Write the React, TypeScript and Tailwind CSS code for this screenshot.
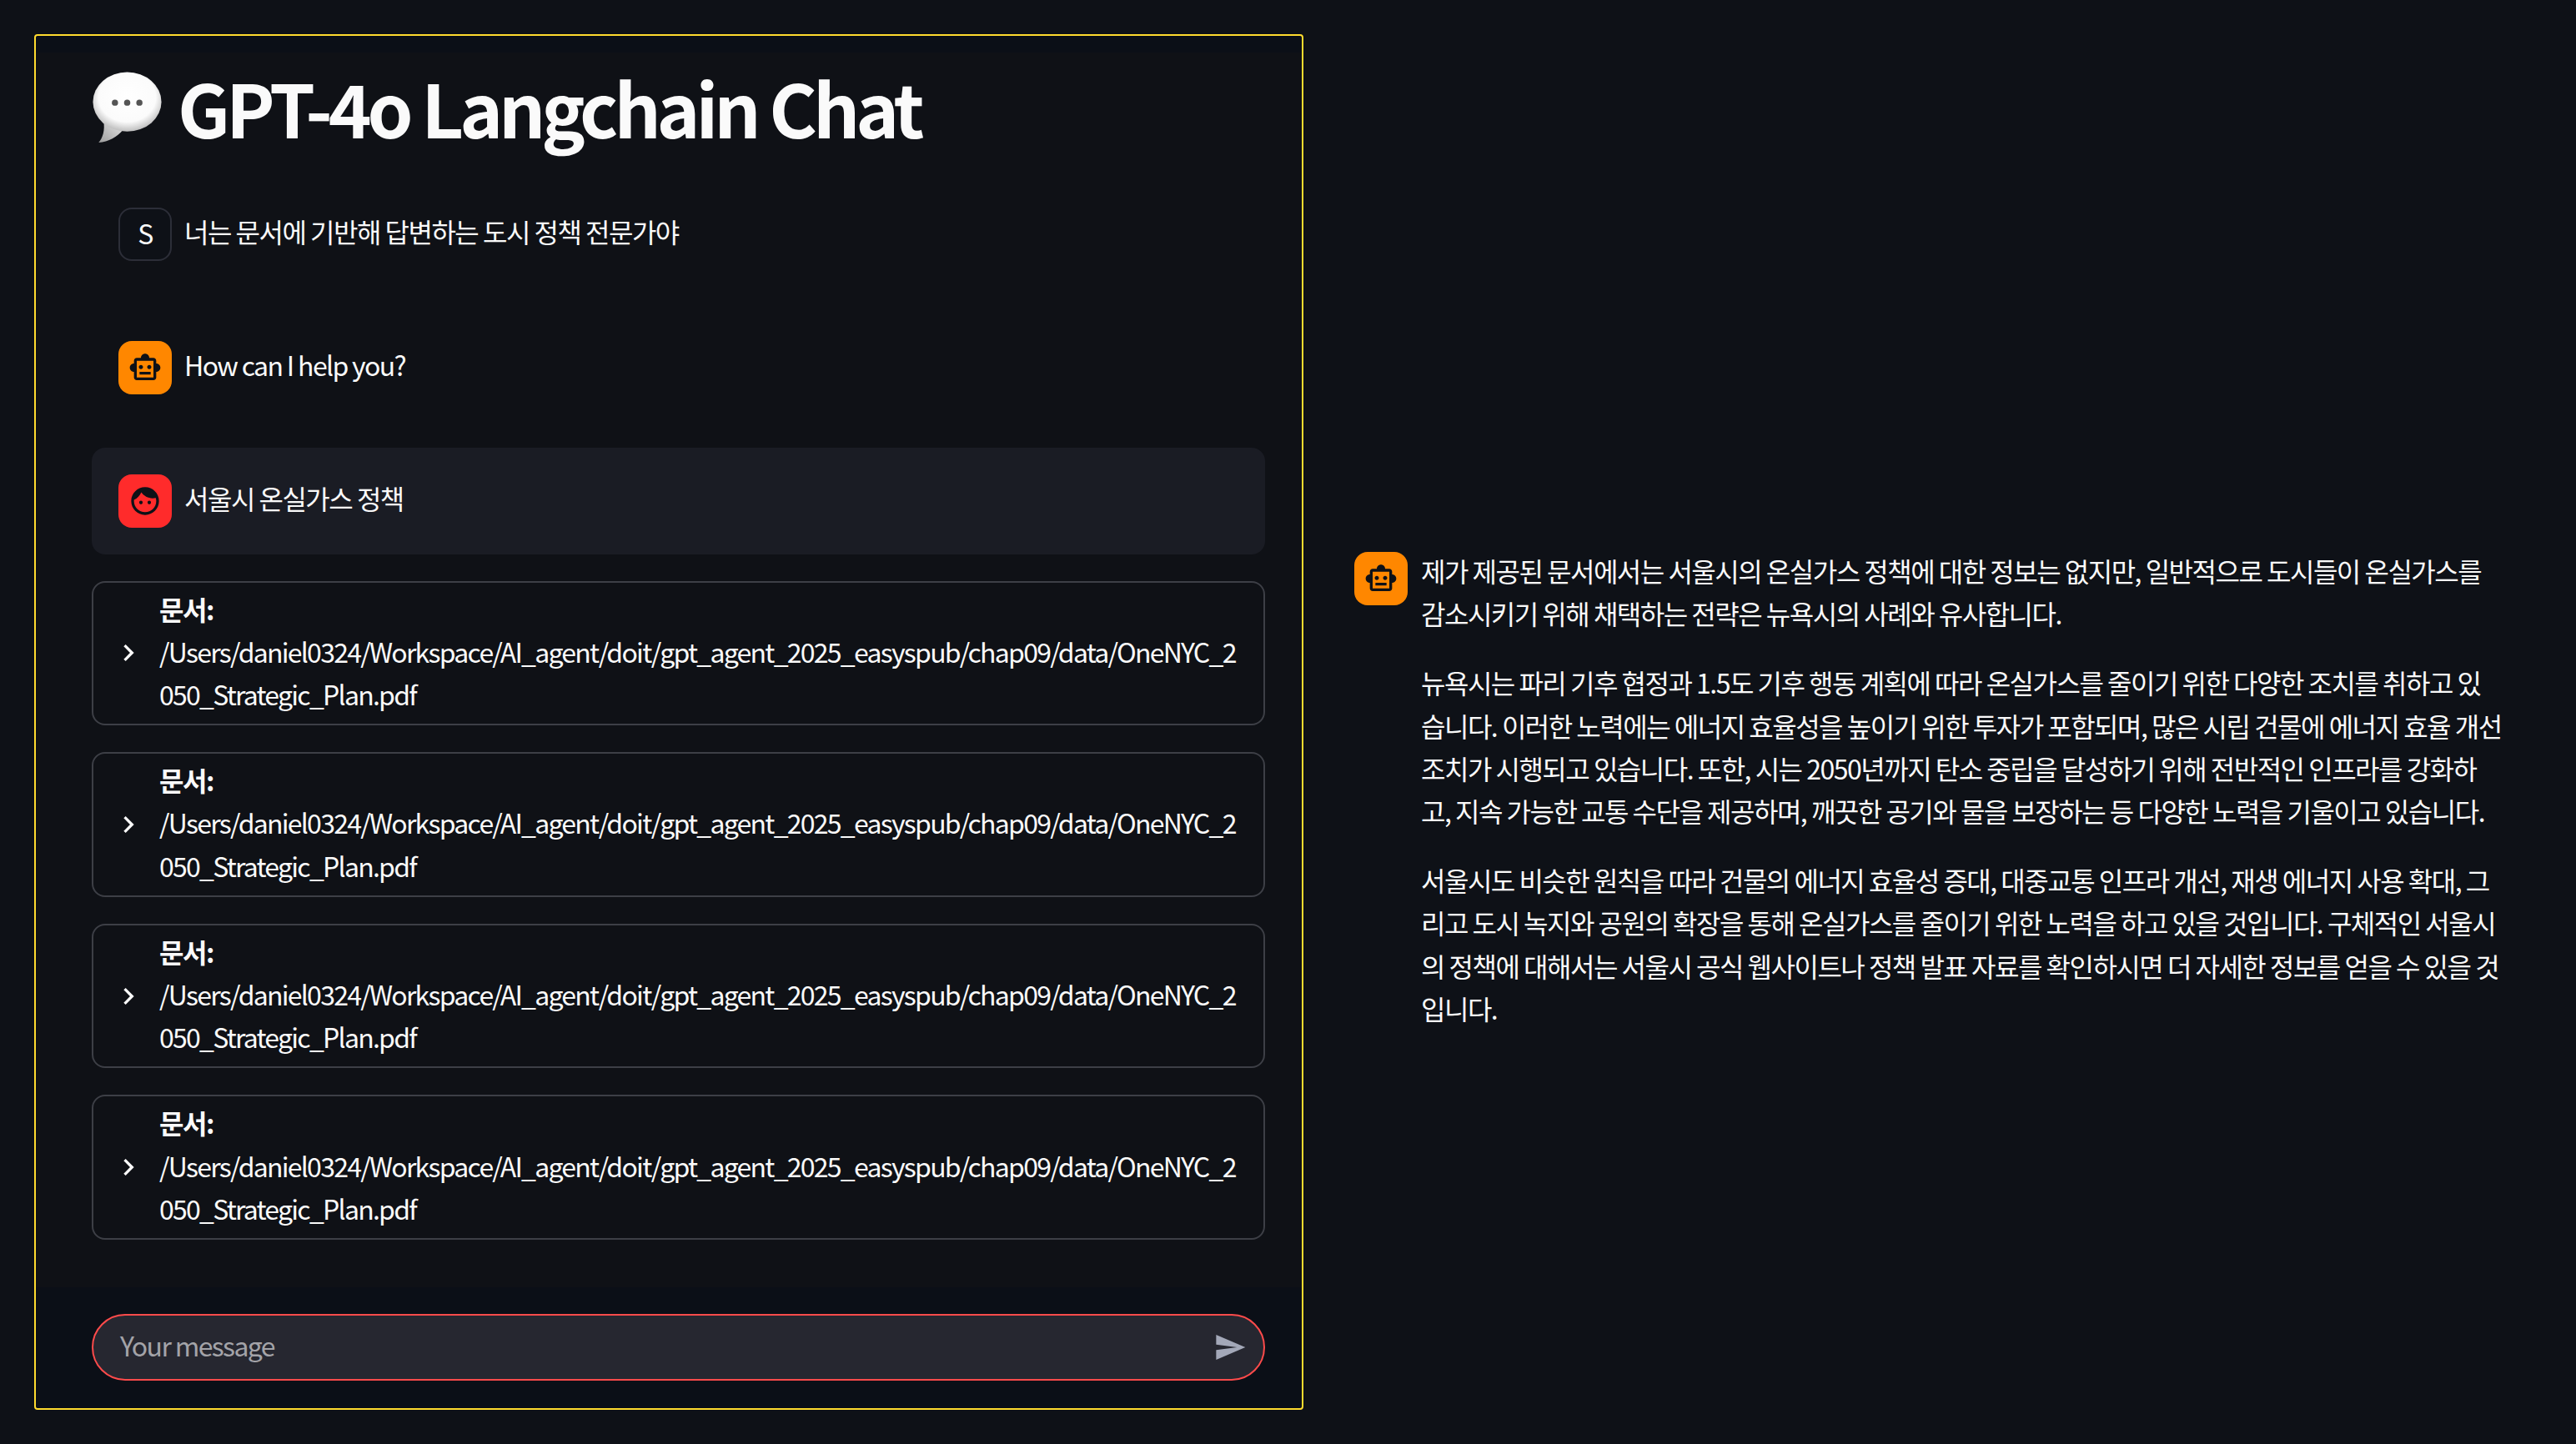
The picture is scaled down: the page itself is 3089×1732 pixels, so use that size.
const SMART_TOY = "M20 9V7c0-1.1-.9-2-2-2h-3c0-1.66-1.34-3-3-3S9 3.34 9 5H6c-1.1 0-2 .9-2 2v2c-1.66 0-3 1.34-3 3s1.34 3 3 3v4c0 1.1.9 2 2 2h12c1.1 0 2-.9 2-2v-4c1.66 0 3-1.34 3-3s-1.34-3-3-3zm-2 10H6V7h12v12zm-9-6c-.83 0-1.5-.67-1.5-1.5S8.17 10 9 10s1.5.67 1.5 1.5S9.83 13 9 13zm7.5-1.5c0 .83-.67 1.5-1.5 1.5s-1.5-.67-1.5-1.5.67-1.5 1.5-1.5 1.5.67 1.5 1.5zM8 15h8v2H8v-2z";
const FACE = "M9 11.75c-.69 0-1.25.56-1.25 1.25s.56 1.25 1.25 1.25 1.25-.56 1.25-1.25-.56-1.25-1.25-1.25zm6 0c-.69 0-1.25.56-1.25 1.25s.56 1.25 1.25 1.25 1.25-.56 1.25-1.25-.56-1.25-1.25-1.25zM12 2C6.48 2 2 6.48 2 12s4.48 10 10 10 10-4.48 10-10S17.52 2 12 2zm0 18c-4.41 0-8-3.59-8-8 0-.29.02-.58.05-.86 2.36-1.05 4.23-2.98 5.21-5.37C11.07 8.33 14.05 10 17.42 10c.78 0 1.53-.09 2.25-.26.21.71.33 1.47.33 2.26 0 4.41-3.59 8-8 8z";

function MaterialAvatar({ path, bg }: { path: string; bg: string }) {
  return (
    <div className={`flex h-16 w-16 shrink-0 items-center justify-center rounded-2xl ${bg}`}>
      <svg viewBox="0 0 24 24" className="h-10 w-10 fill-[#0e1117]">
        <path d={path} />
      </svg>
    </div>
  );
}

function ChatBubbleEmoji() {
  return (
    <svg viewBox="0 0 86 88" className="mt-[-6px] h-[86px] w-[85px] shrink-0">
      <defs>
        <radialGradient id="bubble" cx="50%" cy="42%" r="58%">
          <stop offset="0%" stopColor="#ffffff" />
          <stop offset="72%" stopColor="#fbfbfb" />
          <stop offset="100%" stopColor="#bdbdbd" />
        </radialGradient>
        <linearGradient id="tail" x1="0" y1="1" x2="1" y2="0">
          <stop offset="0%" stopColor="#9c9c9c" />
          <stop offset="100%" stopColor="#e8e8e8" />
        </linearGradient>
      </defs>
      <path d="M14 60 C16 72 13 81 8 87 C20 86 31 80 38 71 Z" fill="url(#tail)" />
      <ellipse cx="43" cy="37" rx="42" ry="36.5" fill="url(#bubble)" />
      <circle cx="28" cy="38" r="3.8" fill="#555" />
      <circle cx="43" cy="38" r="3.8" fill="#555" />
      <circle cx="58" cy="38" r="3.8" fill="#555" />
    </svg>
  );
}

function Expander() {
  return (
    <div className="flex items-center rounded-2xl border-2 border-[#3d3f46] pb-[10px] pl-8 pr-8 pt-[6px]">
      <svg viewBox="0 0 24 24" className="ml-[-10px] mr-[17px] mt-[4px] h-10 w-10 shrink-0 fill-[#fafafa]">
        <path d="M10 6L8.59 7.41 13.17 12l-4.58 4.59L10 18l6-6z" />
      </svg>
      <div className="min-w-0 flex-1 [overflow-wrap:anywhere]">
        <p className="font-semibold">문서:</p>
        <p className="tracking-[-1.75px]">/Users/daniel0324/Workspace/AI_agent/doit/gpt_agent_2025_easyspub/chap09/data/OneNYC_2050_Strategic_Plan.pdf</p>
      </div>
    </div>
  );
}

export default function App() {
  return (
    <div className="flex h-[1732px] w-[3089px] overflow-hidden bg-[#0e1117] text-[32px] leading-[51.2px] tracking-[-1.5px] text-[#fafafa] [font-family:'Noto_Sans_CJK_KR','Noto_Sans',sans-serif]">
      <section className="ml-[41px] mt-[41px] flex h-[1650px] w-[1522px] shrink-0 flex-col rounded border-2 border-[#ffdb2e] bg-[#0f1116]">
        <div className="h-5 shrink-0 rounded-t bg-[#0b0f17]" />
        <div className="flex flex-col gap-8 pl-[67px] pr-[44px] pt-4">
          <h1 className="flex h-[105.6px] items-center gap-[18px] text-[88px] font-bold leading-[105.6px] tracking-[-5.1px]">
            <ChatBubbleEmoji />
            <span className="pb-2">GPT-4o Langchain Chat</span>
          </h1>
          <div className="flex items-center gap-[15px] rounded-2xl p-8">
            <div className="flex h-16 w-16 shrink-0 items-center justify-center rounded-2xl border-2 border-[#2c2e38] bg-[#0e1117] pb-[2px]">S</div>
            <p className="pb-[5px]">너는 문서에 기반해 답변하는 도시 정책 전문가야</p>
          </div>
          <div className="flex items-center gap-[15px] rounded-2xl p-8">
            <MaterialAvatar path={SMART_TOY} bg="bg-[#ff8700]" />
            <p className="pb-[5px] tracking-[-1.65px]">How can I help you?</p>
          </div>
          <div className="flex items-center gap-[15px] rounded-2xl bg-[#1a1c24] p-8">
            <MaterialAvatar path={FACE} bg="bg-[#ff2b2b]" />
            <p className="pb-[5px]">서울시 온실가스 정책</p>
          </div>
          <Expander />
          <Expander />
          <Expander />
          <Expander />
        </div>
        <div className="mt-auto rounded-b bg-[#0b0f17] pb-[33px] pl-[67px] pr-[44px] pt-[32px]">
          <div className="flex h-[80px] items-center justify-between rounded-[40px] border-2 border-[#ff4b4b] bg-[#262730] pl-8 pr-5">
            <span className="pb-[5px] tracking-[-1.65px] text-[#a3a3a8]">Your message</span>
            <svg viewBox="0 0 24 24" className="h-10 w-10 fill-[#a3a8b8]">
              <path d="M2.01 21L23 12 2.01 3 2 10l15 2-15 2z" />
            </svg>
          </div>
        </div>
      </section>
      <section className="ml-[61px] flex shrink-0 items-start gap-4 pt-[662px]">
        <MaterialAvatar path={SMART_TOY} bg="bg-[#ff8700]" />
        <div className="mt-[-3px] flex w-[1298px] flex-col gap-8">
          <p>제가 제공된 문서에서는 서울시의 온실가스 정책에 대한 정보는 없지만, 일반적으로 도시들이 온실가스를 감소시키기 위해 채택하는 전략은 뉴욕시의 사례와 유사합니다.</p>
          <p>뉴욕시는 파리 기후 협정과 1.5도 기후 행동 계획에 따라 온실가스를 줄이기 위한 다양한 조치를 취하고 있습니다. 이러한 노력에는 에너지 효율성을 높이기 위한 투자가 포함되며, 많은 시립 건물에 에너지 효율 개선 조치가 시행되고 있습니다. 또한, 시는 2050년까지 탄소 중립을 달성하기 위해 전반적인 인프라를 강화하고, 지속 가능한 교통 수단을 제공하며, 깨끗한 공기와 물을 보장하는 등 다양한 노력을 기울이고 있습니다.</p>
          <p>서울시도 비슷한 원칙을 따라 건물의 에너지 효율성 증대, 대중교통 인프라 개선, 재생 에너지 사용 확대, 그리고 도시 녹지와 공원의 확장을 통해 온실가스를 줄이기 위한 노력을 하고 있을 것입니다. 구체적인 서울시의 정책에 대해서는 서울시 공식 웹사이트나 정책 발표 자료를 확인하시면 더 자세한 정보를 얻을 수 있을 것입니다.</p>
        </div>
      </section>
    </div>
  );
}
